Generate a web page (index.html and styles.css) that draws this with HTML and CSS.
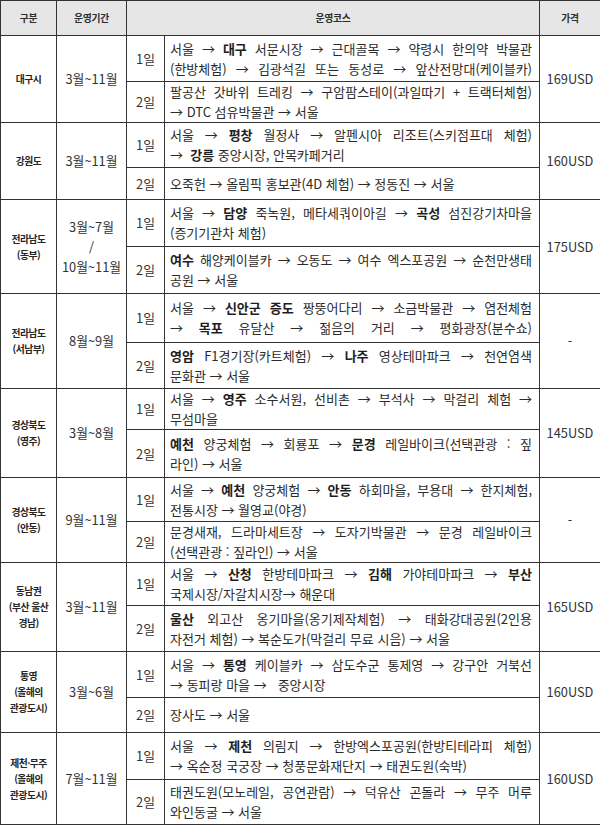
FILE: index.html
```html
<!DOCTYPE html>
<html lang="ko">
<head>
<meta charset="utf-8">
<title>운영코스</title>
<link rel="stylesheet" href="styles.css">
</head>
<body>
<table class="tour">
  <colgroup>
    <col class="c-area"><col class="c-period"><col class="c-day"><col class="c-course"><col class="c-price">
  </colgroup>
  <thead>
    <tr class="r35">
      <th>구분</th>
      <th>운영기간</th>
      <th colspan="2">운영코스</th>
      <th>가격</th>
    </tr>
  </thead>
  <tbody>
    <tr class="r46">
      <td rowspan="2" class="area">대구시</td>
      <td rowspan="2" class="period">3월~11월</td>
      <td class="day">1일</td>
      <td class="course"><span class="j">서울 → <b>대구</b> 서문시장 → 근대골목 → 약령시 한의약 박물관</span><span class="j">(한방체험) → 김광석길 또는 동성로 → 앞산전망대(케이블카)</span></td>
      <td rowspan="2" class="price">169USD</td>
    </tr>
    <tr class="r41">
      <td class="day">2일</td>
      <td class="course"><span class="j">팔공산 갓바위 트레킹 → 구암팜스테이(과일따기 + 트랙터체험)</span><span class="l">→ DTC 섬유박물관 → 서울</span></td>
    </tr>

    <tr class="r45">
      <td rowspan="2" class="area">강원도</td>
      <td rowspan="2" class="period">3월~11월</td>
      <td class="day">1일</td>
      <td class="course"><span class="j">서울 → <b>평창</b> 월정사 → 알펜시아 리조트(스키점프대 체험)</span><span class="l">→ &nbsp;<b>강릉</b> 중앙시장, 안목카페거리</span></td>
      <td rowspan="2" class="price">160USD</td>
    </tr>
    <tr class="r32">
      <td class="day">2일</td>
      <td class="course"><span class="l">오죽헌 → 올림픽 홍보관(4D 체험) → 정동진 → 서울</span></td>
    </tr>

    <tr class="r47">
      <td rowspan="2" class="area">전라남도<br>(동부)</td>
      <td rowspan="2" class="period">3월~7월<br>/<br>10월~11월</td>
      <td class="day">1일</td>
      <td class="course"><span class="j">서울 → <b>담양</b> 죽녹원, 메타세쿼이아길 → <b>곡성</b> 섬진강기차마을</span><span class="l">(증기기관차 체험)</span></td>
      <td rowspan="2" class="price">175USD</td>
    </tr>
    <tr class="r47">
      <td class="day">2일</td>
      <td class="course"><span class="j"><b>여수</b> 해양케이블카 → 오동도 → 여수 엑스포공원 → 순천만생태</span><span class="l">공원 → 서울</span></td>
    </tr>

    <tr class="r49">
      <td rowspan="2" class="area">전라남도<br>(서남부)</td>
      <td rowspan="2" class="period">8월~9월</td>
      <td class="day">1일</td>
      <td class="course"><span class="j">서울 → <b>신안군 증도</b> 짱뚱어다리 → 소금박물관 → 염전체험</span><span class="j">→ <b>목포</b> 유달산 → 젊음의 거리 → 평화광장(분수쇼)</span></td>
      <td rowspan="2" class="price">-</td>
    </tr>
    <tr class="r46">
      <td class="day">2일</td>
      <td class="course"><span class="j"><b>영암</b> F1경기장(카트체험) → <b>나주</b> 영상테마파크 → 천연염색</span><span class="l">문화관 → 서울</span></td>
    </tr>

    <tr class="r41">
      <td rowspan="2" class="area">경상북도<br>(영주)</td>
      <td rowspan="2" class="period">3월~8월</td>
      <td class="day">1일</td>
      <td class="course"><span class="j">서울 → <b>영주</b> 소수서원, 선비촌 → 부석사 → 막걸리 체험 →</span><span class="l">무섬마을</span></td>
      <td rowspan="2" class="price">145USD</td>
    </tr>
    <tr class="r48">
      <td class="day">2일</td>
      <td class="course"><span class="j"><b>예천</b> 양궁체험 → 회룡포 → <b>문경</b> 레일바이크(선택관광 : 짚</span><span class="l">라인) → 서울</span></td>
    </tr>

    <tr class="r44">
      <td rowspan="2" class="area">경상북도<br>(안동)</td>
      <td rowspan="2" class="period">9월~11월</td>
      <td class="day">1일</td>
      <td class="course"><span class="j">서울 → <b>예천</b> 양궁체험 → <b>안동</b> 하회마을, 부용대 → 한지체험,</span><span class="l">전통시장 → 월영교(야경)</span></td>
      <td rowspan="2" class="price">-</td>
    </tr>
    <tr class="r41">
      <td class="day">2일</td>
      <td class="course"><span class="j">문경새재, 드라마세트장 → 도자기박물관 → 문경 레일바이크</span><span class="l">(선택관광 : 짚라인) → 서울</span></td>
    </tr>

    <tr class="r43">
      <td rowspan="2" class="area">동남권<br>(부산 울산<br>경남)</td>
      <td rowspan="2" class="period">3월~11월</td>
      <td class="day">1일</td>
      <td class="course"><span class="j">서울 → <b>산청</b> 한방테마파크 → <b>김해</b> 가야테마파크 → <b>부산</b></span><span class="l">국제시장/자갈치시장→ 해운대</span></td>
      <td rowspan="2" class="price">165USD</td>
    </tr>
    <tr class="r46">
      <td class="day">2일</td>
      <td class="course"><span class="j"><b>울산</b> 외고산 옹기마을(옹기제작체험) → 태화강대공원(2인용</span><span class="l">자전거 체험) → 복순도가(막걸리 무료 시음) → 서울</span></td>
    </tr>

    <tr class="r46">
      <td rowspan="2" class="area">통영<br>(올해의<br>관광도시)</td>
      <td rowspan="2" class="period">3월~6월</td>
      <td class="day">1일</td>
      <td class="course"><span class="j">서울 → <b>통영</b> 케이블카 → 삼도수군 통제영 → 강구안 거북선</span><span class="l">→ 동피랑 마을 → &nbsp; 중앙시장</span></td>
      <td rowspan="2" class="price">160USD</td>
    </tr>
    <tr class="r35">
      <td class="day">2일</td>
      <td class="course"><span class="l">장사도 → 서울</span></td>
    </tr>

    <tr class="r47">
      <td rowspan="2" class="area">제천·무주<br>(올해의<br>관광도시)</td>
      <td rowspan="2" class="period">7월~11월</td>
      <td class="day">1일</td>
      <td class="course"><span class="j">서울 → <b>제천</b> 의림지 → 한방엑스포공원(한방티테라피 체험)</span><span class="l">→ 옥순정 국궁장 → 청풍문화재단지 → 태권도원(숙박)</span></td>
      <td rowspan="2" class="price">160USD</td>
    </tr>
    <tr class="r45">
      <td class="day">2일</td>
      <td class="course"><span class="j">태권도원(모노레일, 공연관람) → 덕유산 곤돌라 → 무주 머루</span><span class="l">와인동굴 → 서울</span></td>
    </tr>
  </tbody>
</table>
</body>
</html>
```

FILE: styles.css
```css
html, body {
  margin: 0;
  padding: 0;
  background: #ffffff;
}

body {
  font-family: "Noto Sans CJK KR", "Noto Sans", sans-serif;
  color: #2b2b2b;
}

.tour {
  width: 600px;
  table-layout: fixed;
  border-collapse: collapse;
  border: 1px solid #2a2a2a;
}

.c-area { width: 56px; }
.c-period { width: 70px; }
.c-day { width: 38px; }
.c-course { width: 375px; }
.c-price { width: 61px; }

.tour th,
.tour td {
  border: 1px solid #333333;
  padding: 0;
  vertical-align: middle;
}

.r32 { height: 32px; }
.r35 { height: 35px; }
.r41 { height: 41px; }
.r43 { height: 43px; }
.r44 { height: 44px; }
.r45 { height: 45px; }
.r46 { height: 46px; }
.r47 { height: 47px; }
.r48 { height: 48px; }
.r49 { height: 49px; }

.tour th {
  background: #e6e6e6;
  font-size: 9.8px;
  font-weight: 700;
  line-height: 14px;
  color: #2e2e2e;
  text-align: center;
  letter-spacing: -0.3px;
}

.area {
  font-size: 9.8px;
  font-weight: 700;
  line-height: 16px;
  text-align: center;
  letter-spacing: -0.5px;
  color: #262626;
}

.period {
  font-size: 12.8px;
  line-height: 20px;
  text-align: center;
  color: #333;
}

.day {
  font-size: 12.8px;
  line-height: 18px;
  text-align: center;
  color: #333;
}

.tour td.course {
  font-size: 13px;
  line-height: 20px;
  padding: 0 7px 0 5px;
  color: #2b2b2b;
}

.course b {
  font-weight: 700;
  color: #1e1e1e;
}

.course .j {
  display: block;
  text-align: justify;
  text-align-last: justify;
}

.course .l {
  display: block;
  text-align: left;
}

.price {
  font-size: 12.8px;
  line-height: 18px;
  text-align: center;
  color: #333;
}
```
